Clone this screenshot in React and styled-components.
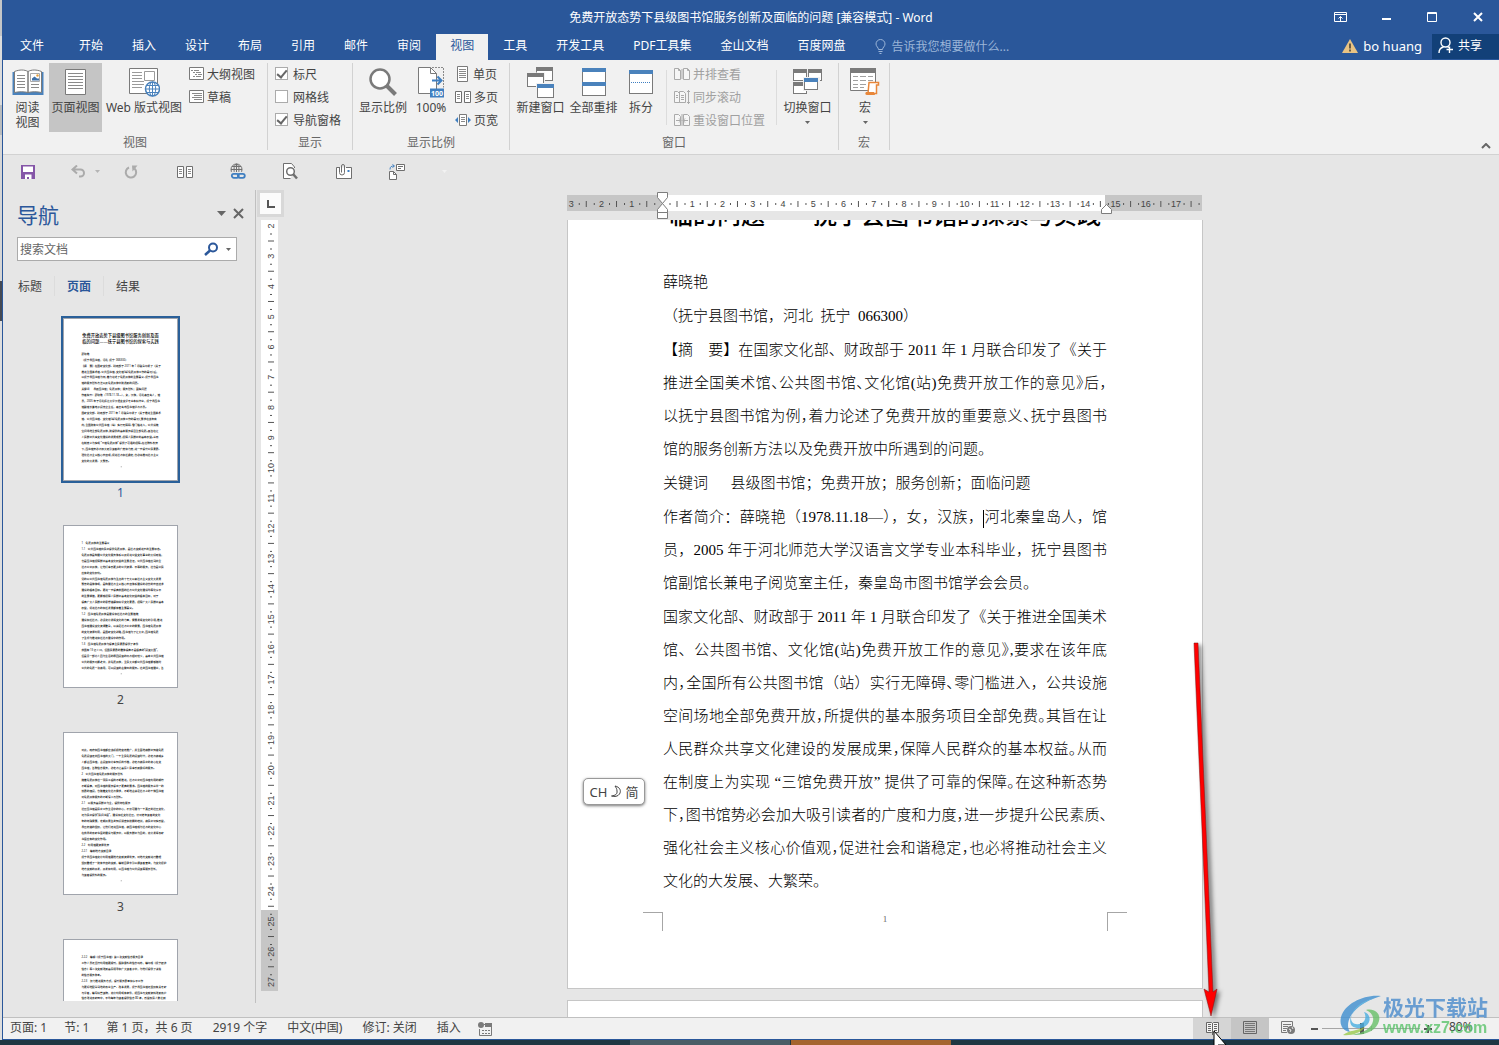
import React, { useState } from "react"
import styled, { createGlobalStyle } from "styled-components"

const RULER_UNIT = 30.24

const TABS = [
  "开始",
  "插入",
  "设计",
  "布局",
  "引用",
  "邮件",
  "审阅",
  "视图",
  "工具",
  "开发工具",
  "PDF工具集",
  "金山文档",
  "百度网盘",
]

// "~" marks a punctuation sign that takes half a cell
const PARAGRAPHS = [
  { lines: ["薛晓艳"] },
  { lines: ["（抚宁县图书馆，河北\u00a0\u00a0抚宁\u00a0\u00a0066300）"] },
  {
    lines: [
      "【摘　要】在国家文化部、财政部于 2011 年 1 月联合印发了《关于",
      "推进全国美术馆~、公共图书馆~、文化馆(站)免费开放工作的意见~》后~，",
      "以抚宁县图书馆为例~，着力论述了免费开放的重要意义~、抚宁县图书",
      "馆的服务创新方法以及免费开放中所遇到的问题。",
    ],
  },
  { lines: ["关键词　\u00a0\u00a0县级图书馆；免费开放；服务创新；面临问题"] },
  {
    lines: [
      "作者简介：薛晓艳（1978.11.18—），女，汉族，|河北秦皇岛人，馆",
      "员，2005 年于河北师范大学汉语言文学专业本科毕业，抚宁县图书",
      "馆副馆长兼电子阅览室主任，秦皇岛市图书馆学会会员。",
    ],
  },
  {
    lines: [
      "国家文化部、财政部于 2011 年 1 月联合印发了《关于推进全国美术",
      "馆、公共图书馆、文化馆(站)免费开放工作的意见~》,要求在该年底",
      "内~，全国所有公共图书馆（站）实行无障碍~、零门槛进入，公共设施",
      "空间场地全部免费开放~，所提供的基本服务项目全部免费~。其旨在让",
      "人民群众共享文化建设的发展成果~，保障人民群众的基本权益~。从而",
      "在制度上为实现 “三馆免费开放” 提供了可靠的保障~。在这种新态势",
      "下~，图书馆势必会加大吸引读者的广度和力度~，进一步提升公民素质~、",
      "强化社会主义核心价值观~，促进社会和谐稳定~，也必将推动社会主义",
      "文化的大发展、大繁荣。",
    ],
  },
]

const TITLE_LINES = [
  "免费开放态势下县级图书馆服务创新及面",
  "临的问题——抚宁县图书馆的探索与实践",
]

const PAGE_ONE = [
  ...TITLE_LINES,
  "",
  ...PARAGRAPHS.reduce((all, item) => all.concat(item.lines), []),
].map(line => line.replace("|", ""))

const PAGE_TWO = [
  "1　免费开放的重要意义",
  "1.1　公共图书馆向民众提供免费开放，是社会文明进步的重要标志~。",
  "免费开放是构建公共文化服务体系以及促进公益文化事业的大好政策~，",
  "也是图书馆保障群众基本文化权益的重要途径，公共图书馆应当向全",
  "社会公众开放，让他们享受更多的公共资源、平等的服务，这也是公民",
  "应有的文化权利。",
  "党的以公共图书馆免费开放为重点的十七大以来社会主义文化大发展",
  "繁荣的具体体现，是构建社会主义核心价值体系建设的必然的价值追求",
  "建设的根本目标。更进一步提高我国的社会公共文化建设均等化水平",
  "的重要举措，更能够保障人民群众基本文化权益的根本目标，对于",
  "提高广大人民群众的思想道德和科学文化素质，保障广大人民群众基本",
  "权益，促进社会的和谐发展都有着重要意义。",
  "1.2　图书馆免费开放是建设和谐社会的重要措施",
  "建设和谐社会，必须充分发挥文化的力量，需要发挥文化的引领~，推进",
  "图书馆建设文化资源整合，以满足社会公众的需要，图书馆免费开放",
  "的文化资源利用，是国家文化战略~，图书馆为了让大众~，图书馆免费",
  "了重视为推进和谐社会建设中的作用。",
  "1.3　图书馆免费开放为提高全民素质提供了条件",
  "我国有 13 亿人口，但国民素质的整体提高不是很高的“阅读大国”，",
  "但是另一部分人因为生活的原因阅读的机会相对较少，基本公共图书馆",
  "公共的服务功能之中，并免费开放，全民大众都公共图书馆能够随时",
  "公共的免费一次使用，可以阅读的去做出的服务。这类图书馆建立，各",
]

const PAGE_THREE = [
  "对此，政府和图书馆都应该积极地宣传推广，并全面地使群众知道免费",
  "免费阅读走向图书馆的大门，一个全民免费的阅读时代，必定会使城乡",
  "人都去图书馆，去阅读和分享知识的乐趣，必定会使民众的身心在文",
  "图书馆，各种信息服务，必定会让基层人民享受到最好的服务。",
  "2　公共图书馆免费开放的服务创新",
  "随着免费开放这一惠民工程的不断推进，社会公众对图书馆利用的期待",
  "不断提高，对图书馆的服务提出了更高的要求。图书馆的服务从单一的",
  "纸质的借阅，也随着文化社会需求，不断地去满足社会上的个体图书馆",
  "对免费开放服务的不断深入与创新。",
  "2.1　以服务基层群众为主，提供特色服务",
  "社区图书馆是民众工作生活中的中心，不仅可建为一个真正的社区文化~，",
  "还为民众提供“民间书屋”，建设和谐文化社区，针对老年读者的文化",
  "年的特殊需要，定期开展各类知识讲座和技能的培训，使民众切实受益~，",
  "县区街道的组织，让他们走进图书馆，使图书馆成为社会的文化中心",
  "在我县的农家书屋的建设与服务中，以服务群众为目的，充分发挥农家",
  "书屋应有的文化作用。",
  "2.2　利用馆藏资源优势",
  "2.2.1　编制地方文献目录",
  "抚宁县图书馆充分利用馆藏地方文献资源优势，对地方文献进行整理",
  "组织整理了一批有价值的文献，编制目录索引以便读者查询，为文化保护",
  "地方文献的开发，开发和利用，以图书馆为公共阅读等服务创新，",
  "为读者提供新的服务。",
]

const PAGE_FOUR = [
  "2.2.2　编辑《抚宁图书馆》第二次文献信息服务目录",
  "工作人员还坚持利用馆藏报刊，跟踪最新的信息动态，编印成《抚宁经济",
  "信息》等二次文献送到基层领导和广大读者手中，为他们提供了决策",
  "的信息服务参考。",
  "2.2.3　努力推进服务方式，提升服务质量和水平工作",
  "为更好地配合当地的农业生产、改革发展，抚宁县图书馆还组织有关专家",
  "与学者，编写科普读物，充分利用现有条件，把图书与文献资料送到农户",
  "信息送进农家田中，平均每年为读者提供信息 80 条，受益农民人数达到",
]

const THUMBS = [PAGE_ONE, PAGE_TWO, PAGE_THREE, PAGE_FOUR]

const splitHalf = (line, as) =>
  line.split(/(~.|\||[\w.,()“”—]+)/).map((part, index) => {
    if (part === "|") return <Caret key={index} />
    if (part[0] === "~")
      return (
        <Half as={as} key={index}>
          {part[1]}
        </Half>
      )
    if (/^[\w.,()“”—]/.test(part))
      return (
        <Latin as={as} key={index}>
          {part}
        </Latin>
      )
    return part
  })

/* ---------- icons ---------- */

const Svg = ({ w, h, children, ...rest }) => (
  <svg
    width={w}
    height={h}
    viewBox={`0 0 ${w} ${h}`}
    fill="none"
    aria-hidden="true"
    {...rest}
  >
    {children}
  </svg>
)

const ReadIcon = () => (
  <Svg w={32} h={28}>
    <path d="M0.5 4h31v23H0.5z" fill="#4a82bc" />
    <path
      d="M2.500 3.500c5-2 10-2 13.500 0v21c-4-1-9-1-13.500 0zM29.500 3.500c-5-2-10-2-13.500 0v21c4-1 9-1 13.500 0z"
      fill="#fff"
      stroke="#7a7a7a"
    />
    <path
      d="M5 7.500h8M5 10.500h8M5 13.500h8M5 16.500h8M5 19.500h8M19 16.500h8M19 19.500h8"
      stroke="#8a8a8a"
    />
    <path d="M18.500 5.500h9v8h-9z" fill="#fff" stroke="#aaa" />
    <path d="M20 12.500v-2l2.500-2 2.500 2h2v2z" fill="#3c6fa8" />
    <circle cx="25.500" cy="7.500" r="1.200" fill="#e8a13c" />
  </Svg>
)

const PageIcon = () => (
  <Svg w={22} h={28}>
    <path d="M0.500 1.500h20v25h-20z" fill="#fff" stroke="#7a7a7a" />
    <path
      d="M3 5.500h15M3 8.500h15M3 11.500h15M3 14.500h15M3 17.500h15M3 20.500h15"
      stroke="#8a8a8a"
    />
  </Svg>
)

const WebIcon = () => (
  <Svg w={32} h={30}>
    <path d="M1.500 1.500h28v25h-28z" fill="#fff" stroke="#7a7a7a" />
    <path
      d="M4 5.500h10M4 8.500h10M4 11.500h10M4 14.500h12M4 17.500h12M4 20.500h10"
      stroke="#9a9a9a"
    />
    <path d="M16.500 4.500h10v9h-10z" stroke="#9a9a9a" />
    <circle cx="24.500" cy="22" r="7" fill="#fff" stroke="#4a82bc" strokeWidth="1.500" />
    <ellipse cx="24.500" cy="22" rx="3.200" ry="7" stroke="#4a82bc" />
    <path d="M17.500 22h14M24.500 15v14M18.500 18.500h12M18.500 25.500h12" stroke="#4a82bc" />
  </Svg>
)

const OutlineIcon = () => (
  <Svg w={15} h={14}>
    <path d="M0.500 0.500h14v12H0.500z" fill="#fff" stroke="#7a7a7a" />
    <path d="M2 3.500h2M5 3.500h5M4 5.500h2M7 5.500h5M6 7.500h2M9 7.500h4M4 9.500h2M7 9.500h5" stroke="#8a8a8a" />
  </Svg>
)

const DraftIcon = () => (
  <Svg w={15} h={14}>
    <path d="M0.500 0.500h14v12H0.500z" fill="#fff" stroke="#7a7a7a" />
    <path d="M3 3.500h10M5 5.500h8M3 7.500h10M5 9.500h8" stroke="#8a8a8a" />
  </Svg>
)

const ZoomIcon = () => (
  <Svg w={30} h={30}>
    <circle cx="12" cy="12" r="9.500" fill="#fff" stroke="#7a7a7a" strokeWidth="2.500" />
    <path d="M19 19l8.500 8.500" stroke="#7a7a7a" strokeWidth="4" />
  </Svg>
)

const HundredIcon = () => (
  <Svg w={28} h={32}>
    <path d="M1.500 1.500h12l6 6v20h-18z" fill="#fff" stroke="#7a7a7a" />
    <path d="M13.500 1.500v6h6" stroke="#7a7a7a" />
    <path d="M15 1.500h11.500v20" stroke="#8a8a8a" strokeDasharray="2 1" />
    <path d="M15 14.500h9M20.500 10.500l4 4-4 4" stroke="#3f7fc1" strokeWidth="2" />
    <path d="M13 22.500h14v9H13z" fill="#3f7fc1" />
    <text x="20" y="29.500" fontSize="7" fontWeight="700" textAnchor="middle" fill="#fff">
      100
    </text>
  </Svg>
)

const OnePageIcon = () => (
  <Svg w={15} h={16}>
    <path d="M2.500 0.500h10v15h-10z" fill="#fff" stroke="#7a7a7a" />
    <path d="M4 3.500h7M4 5.500h7M4 7.500h7M4 9.500h7M4 11.500h7" stroke="#8a8a8a" />
  </Svg>
)

const TwoPageIcon = () => (
  <Svg w={16} h={12}>
    <path d="M0.500 0.500h6v11h-6zM9.500 0.500h6v11h-6z" fill="#fff" stroke="#6f6f6f" />
    <path d="M2 3.500h3M2 5.500h3M2 7.500h3M11 3.500h3M11 5.500h3M11 7.500h3" stroke="#8a8a8a" />
  </Svg>
)

const PageWidthIcon = () => (
  <Svg w={16} h={12}>
    <path d="M4.500 0.500h7v11h-7z" fill="#fff" stroke="#7a7a7a" />
    <path d="M6 3.500h4M6 5.500h4M6 7.500h4" stroke="#8a8a8a" />
    <path d="M3 3v6L0 6zM13 3v6l3-3z" fill="#3f7fc1" />
  </Svg>
)

const WindowBox = ({ x, y, w, h, color = "#7a7a7a" }) => (
  <g>
    <rect x={x} y={y} width={w} height={h} fill="#fff" stroke="#7a7a7a" />
    <rect x={x - 0.5} y={y - 0.5} width={w + 1} height="4" fill={color} />
  </g>
)

const NewWindowIcon = () => (
  <Svg w={28} h={32}>
    <WindowBox x={9.5} y={1.5} w={16} h={13} />
    <path d="M-1 6.500h19v15h-19z" fill="#f1f1f1" />
    <WindowBox x={0.5} y={7.5} w={16} h={13} />
    <path d="M9 17h19v15H9z" fill="#f1f1f1" />
    <WindowBox x={10.5} y={18.5} w={16} h={13} color="#4a82bc" />
  </Svg>
)

const ArrangeIcon = () => (
  <Svg w={24} h={30}>
    <WindowBox x={0.5} y={1.5} w={23} h={14} color="#4a82bc" />
    <WindowBox x={0.5} y={15.5} w={23} h={13} color="#4a82bc" />
  </Svg>
)

const SplitIcon = () => (
  <Svg w={24} h={26}>
    <WindowBox x={0.5} y={1.5} w={23} h={23} color="#4a82bc" />
    <path d="M2 13.500h20" stroke="#3f7fc1" strokeDasharray="1 1" />
  </Svg>
)

const SideIcon = () => (
  <Svg w={16} h={12}>
    <path d="M0.500 0.500h4l2 2v9h-6zM9.500 0.500h4l2 2v9h-6z" fill="#f6f6f6" stroke="#aaa" />
    <path d="M4.500 0.500v2h2M13.500 0.500v2h2" stroke="#aaa" />
    <path d="M8 1v10" stroke="#aaa" />
  </Svg>
)

const SyncIcon = () => (
  <Svg w={16} h={16}>
    <path d="M0.500 2.500h3l2 2v9h-5zM5.500 2.500h4l2 2v9h-6z" fill="#f6f6f6" stroke="#aaa" />
    <path d="M7 6.500h3M7 8.500h3M7 10.500h3M2 6.500h2M2 8.500h2M14.500 1v14M13 2.500h3M13 13.500h3" stroke="#aaa" />
  </Svg>
)

const ResetIcon = () => (
  <Svg w={16} h={12}>
    <path d="M0.500 0.500h4l2 2v9h-6zM9.500 0.500h4l2 2v9h-6z" fill="#f6f6f6" stroke="#aaa" />
    <path d="M2 6.500h5M5 4.500l2 2-2 2M14 6.500H9M11 4.500l-2 2 2 2M8 0v12" stroke="#aaa" />
  </Svg>
)

const SwitchIcon = () => (
  <Svg w={30} h={28}>
    <WindowBox x={0.5} y={1.5} w={13} h={11} />
    <WindowBox x={15.5} y={1.5} w={13} h={11} />
    <WindowBox x={0.5} y={14.5} w={13} h={11} />
    <path d="M10 9h17v14H10z" fill="#f1f1f1" />
    <WindowBox x={11.5} y={10.5} w={13} h={11} color="#4a82bc" />
  </Svg>
)

const MacroIcon = () => (
  <Svg w={32} h={30}>
    <path d="M1.500 1.500h25v22h-25z" fill="#fff" stroke="#7a7a7a" />
    <path d="M1 1h26v5H1z" fill="#7a7a7a" />
    <path
      d="M4 9.500h5M11 9.500h6M19 9.500h5M4 13.500h5M11 13.500h6M19 13.500h5M4 17.500h5M11 17.500h6M4 20.500h5M11 20.500h4"
      stroke="#a0a0a0"
    />
    <path d="M20 15.500h9.500v2.500h-2v8.500H19z" fill="#fff" stroke="#e8873a" strokeWidth="1.500" />
    <path d="M17 25h8l1 3h-8c-2 0-2-2-1-3z" fill="#e8873a" />
  </Svg>
)

const ArrowDown = ({ color = "#666" }) => (
  <Svg w={5} h={3}>
    <path d="M0 0h5L2.500 3z" fill={color} />
  </Svg>
)

const SaveIcon = () => (
  <Svg w={14} h={14}>
    <path d="M0 0h14v14H0z" fill="#8556a8" />
    <path d="M2 1.500h10v5.500H2z" fill="#fff" />
    <path d="M4 9.500h6.500v4.500H8v-2H6v2H4z" fill="#fff" />
  </Svg>
)

const UndoIcon = () => (
  <Svg w={15} h={13}>
    <path d="M6 0.500L1.500 4.500 6 8.500M2 4.500h7.500a3.500 3.500 0 0 1 0 7H8" stroke="#ababab" strokeWidth="2" />
  </Svg>
)

const RedoIcon = () => (
  <Svg w={14} h={14}>
    <path d="M5 2.500a5.200 5.200 0 1 0 5.500 1" stroke="#ababab" strokeWidth="2" />
    <path d="M8 0.500h5.500L8.500 6.500z" fill="#ababab" />
  </Svg>
)

const GlobeLinkIcon = () => (
  <Svg w={16} h={17}>
    <circle cx="6.500" cy="6.500" r="5.500" stroke="#6f6f6f" />
    <ellipse cx="6.500" cy="6.500" rx="2.500" ry="5.500" stroke="#6f6f6f" />
    <path d="M1 6.500h11M2 3.500h9M6.500 1v11" stroke="#6f6f6f" />
    <path d="M0 9h16v8H0z" fill="#e6e6e6" />
    <rect x="1.800" y="10.800" width="7" height="4" rx="2" stroke="#3f7fc1" strokeWidth="1.800" />
    <rect x="7.800" y="10.800" width="7" height="4" rx="2" stroke="#3f7fc1" strokeWidth="1.800" />
  </Svg>
)

const PreviewIcon = () => (
  <Svg w={15} h={17}>
    <path d="M11.500 5V4L8.500 0.500h-8v15h7" fill="#fff" stroke="#6f6f6f" />
    <circle cx="7.500" cy="8.500" r="3.800" fill="#fff" stroke="#6f6f6f" strokeWidth="1.500" />
    <path d="M10 11l4 4.500" stroke="#6f6f6f" strokeWidth="2.500" />
  </Svg>
)

const MailIcon = () => (
  <Svg w={17} h={16}>
    <path d="M3 3.500H0.500v11h15v-11H10" fill="#fff" stroke="#6f6f6f" />
    <path d="M3.500 3v5.500a2.500 2.500 0 0 0 5 0V2a1.500 1.500 0 0 0-3 0v6.500" stroke="#6f6f6f" />
    <path d="M11.500 6h2v2h-2z" fill="#3f7fc1" />
  </Svg>
)

const CompareIcon = () => (
  <Svg w={17} h={17}>
    <path d="M7.500 1.500h8v6h-8z" fill="#fff" stroke="#6f6f6f" />
    <path d="M9 3.500h5M9 5.500h3" stroke="#6f6f6f" />
    <path d="M1 6.500c0-3 1.500-3.500 4-3.500M3.500 1.500L5.500 3l-2 1.500" stroke="#3f7fc1" />
    <path d="M0.500 8.500h4l3 3v5h-7z" fill="#fff" stroke="#6f6f6f" />
    <path d="M4.500 8.500v3h3" stroke="#6f6f6f" />
  </Svg>
)

const WarningIcon = () => (
  <Svg w={16} h={14}>
    <path d="M8 0l8 14H0z" fill="#e9c383" />
    <path d="M8 4.500v5M8 10.500v2" stroke="#5a5040" strokeWidth="1.800" />
  </Svg>
)

const ShareIcon = () => (
  <Svg w={16} h={17}>
    <circle cx="7.500" cy="5.500" r="4.500" stroke="#fff" strokeWidth="1.400" />
    <path d="M1 16c0-3.500 2-5.500 4.500-6M9.500 9.500l1.500 1M11.500 9.500v6.500M8.500 12.500h6.500" stroke="#fff" strokeWidth="1.400" />
  </Svg>
)

const BulbIcon = () => (
  <Svg w={11} h={15}>
    <path d="M3.500 10.500C3.500 8.500 1 7.500 1 5a4.500 4.500 0 0 1 9 0c0 2.500-2.500 3.500-2.500 5.500zM3.500 12.500h4M4.500 14.500h2" stroke="#9bb5d8" />
  </Svg>
)

const SearchIcon = () => (
  <Svg w={15} h={14}>
    <circle cx="9" cy="5.500" r="4" stroke="#2b579a" strokeWidth="2" />
    <path d="M6 8.500l-5 4.500" stroke="#2b579a" strokeWidth="2.500" />
  </Svg>
)

const CloseIcon = ({ color, size = 10 }) => (
  <Svg w={size} h={size}>
    <path d={`M1 1l${size - 2} ${size - 2}M${size - 1} 1L1 ${size - 1}`} stroke={color} strokeWidth="2" />
  </Svg>
)

const RibbonToggleIcon = () => (
  <Svg w={13} h={10}>
    <path d="M0.500 0.500h12v9H0.500zM0.500 2.500h12M6.500 9V4.500M4.500 6.500l2-2 2 2" stroke="#fff" />
  </Svg>
)

const MacroRecordIcon = () => (
  <Svg w={14} h={14}>
    <path d="M6 2.500h7.500v11h-12V7" stroke="#7a7a7a" />
    <path d="M7 1h7v4H7z" fill="#7a7a7a" />
    <path d="M4 8.500h2M7 8.500h2M10 8.500h2M4 11.500h2M7 11.500h2M10 11.500h2" stroke="#7a7a7a" />
    <circle cx="3" cy="3" r="3" fill="#7a7a7a" />
  </Svg>
)

const StatusReadIcon = () => (
  <Svg w={13} h={14}>
    <path d="M0.500 1.500h5l1 1 1-1h5v10h-5l-1 1-1-1h-5z" fill="#f5f5f5" stroke="#666" />
    <path d="M6.500 2v12" stroke="#666" />
    <path d="M2 3.500h3M2 5.500h3M2 7.500h3M2 9.500h3M8 3.500h3M8 5.500h3M8 7.500h3M8 9.500h3" stroke="#666" />
  </Svg>
)

const StatusPageIcon = () => (
  <Svg w={14} h={13}>
    <path d="M0.500 0.500h13v12h-13z" stroke="#666" />
    <path d="M2 2.500h10M2 4.500h10M2 6.500h10M2 8.500h10M2 10.500h10" stroke="#777" />
  </Svg>
)

const StatusWebIcon = () => (
  <Svg w={14} h={13}>
    <path d="M11.500 5V0.500H0.500v11H6M2 3.500h8M2 5.500h5M2 7.500h4M2 9.500h3" stroke="#7a7a7a" />
    <circle cx="10" cy="9" r="4" fill="#7a7a7a" />
    <path d="M8 8l2 1-1 2M11 6l1 2" stroke="#eee" />
  </Svg>
)

/* ---------- rulers ---------- */

const HorizontalRuler = () => {
  const zero = 95
  const marks = []
  for (let i = -3; i <= 17; i++) {
    const x = zero + i * RULER_UNIT
    if (i !== 0)
      marks.push(
        <text key={i} x={x} y="15" textAnchor="middle">
          {Math.abs(i)}
        </text>
      )
    marks.push(
      <path
        key={`t${i}`}
        d={`M${x + 8} 11v2M${x + 15} 9v6M${x + 23} 11v2`}
        stroke="#555"
      />
    )
  }
  return (
    <HRuler width="636" height="28" viewBox="0 0 636 28" aria-label="标尺">
      <rect y="3" width="635" height="16" fill="#c6c6c6" />
      <rect x={zero} y="3" width="443" height="16" fill="#fff" />
      {marks}
      <g fill="#fff" stroke="#7d7d7d">
        <path d="M90.500 0.500h10v5l-5 6-5-6zM90.500 20.500v-3l5-6 5 6v3zM90.500 20.500h10v6h-10z" />
        <path d="M534.500 21.500v-4l5-5 5 5v4z" />
      </g>
    </HRuler>
  )
}

const VerticalRuler = () => {
  const marks = []
  for (let i = 2; i <= 27; i++) {
    const y = 6 + (i - 2) * RULER_UNIT
    marks.push(
      <text
        key={i}
        x="10"
        y={y}
        textAnchor="middle"
        dominantBaseline="central"
        transform={`rotate(-90 10 ${y})`}
      >
        {i}
      </text>
    )
    if (i < 27)
      marks.push(
        <path
          key={`t${i}`}
          d={`M9 ${y + 8}h2M7 ${y + 15}h6M9 ${y + 23}h2`}
          stroke="#555"
        />
      )
  }
  return (
    <VRuler width="17" height="771" viewBox="0 0 17 771" aria-label="垂直标尺">
      <rect width="17" height="690" fill="#fff" />
      <rect y="690" width="17" height="81" fill="#c6c6c6" />
      {marks}
    </VRuler>
  )
}

const Thumbnail = ({ lines, title }) => (
  <ThumbDrawing viewBox="0 0 636 901">
    {lines.map((line, index) => {
      const isTitle = title && index < 2
      return (
        <text
          key={index}
          x={isTitle ? 318 : 98}
          y={101 + index * 33.4}
          textAnchor={isTitle ? "middle" : "start"}
          fontSize={isTitle ? 24 : 15}
          fontWeight={500}
        >
          {splitHalf(line, "tspan")}
        </text>
      )
    })}
    <circle cx="322" cy="832" r="3" fill="#888" />
  </ThumbDrawing>
)

/* ---------- page ---------- */

const App = () => {
  const [tab, setTab] = useState("视图")
  const [page, setPage] = useState(0)
  const [navTab, setNavTab] = useState("页面")

  return (
    <Desktop>
      <GlobalStyle />
      <Window>
        <TitleBar>
          <Title>免费开放态势下县级图书馆服务创新及面临的问题 [兼容模式] - Word</Title>
          <WindowButtons>
            <WindowButton aria-label="功能区显示选项">
              <RibbonToggleIcon />
            </WindowButton>
            <WindowButton aria-label="最小化">
              <Svg w={9} h={10}>
                <path d="M0 7h9" stroke="#fff" strokeWidth="2" />
              </Svg>
            </WindowButton>
            <WindowButton aria-label="最大化">
              <Svg w={10} h={10}>
                <path d="M0.500 0.500h9v9h-9zM0 1.500h10" stroke="#fff" />
              </Svg>
            </WindowButton>
            <WindowButton aria-label="关闭">
              <CloseIcon color="#fff" />
            </WindowButton>
          </WindowButtons>
        </TitleBar>

        <TabBar>
          <FileTab>文件</FileTab>
          {TABS.map(item => (
            <TabBtn key={item} $active={item === tab} onClick={() => setTab(item)}>
              {item}
            </TabBtn>
          ))}
          <TellMe>
            <BulbIcon />
            告诉我您想要做什么...
          </TellMe>
          <Account>
            <WarningIcon />
            bo huang
          </Account>
          <ShareBtn>
            <ShareIcon />
            共享
          </ShareBtn>
        </TabBar>

        <Ribbon>
          <Group>
            <GroupBody $left={3}>
              <BigButton $width={43}>
                <BigIcon>
                  <ReadIcon />
                </BigIcon>
                阅读
                <br />
                视图
              </BigButton>
              <BigButton $width={53} $pressed>
                <BigIcon>
                  <PageIcon />
                </BigIcon>
                页面视图
              </BigButton>
              <BigButton $width={84}>
                <BigIcon>
                  <WebIcon />
                </BigIcon>
                Web 版式视图
              </BigButton>
              <SmallColumn $left={3} $right={12}>
                <SmallButton>
                  <OutlineIcon />
                  大纲视图
                </SmallButton>
                <SmallButton>
                  <DraftIcon />
                  草稿
                </SmallButton>
              </SmallColumn>
            </GroupBody>
            <GroupName>视图</GroupName>
          </Group>

          <Group>
            <GroupBody $left={7}>
              <SmallColumn $left={0} $right={11}>
                <CheckLabel>
                  <CheckBox type="checkbox" defaultChecked />
                  标尺
                </CheckLabel>
                <CheckLabel>
                  <CheckBox type="checkbox" />
                  网格线
                </CheckLabel>
                <CheckLabel>
                  <CheckBox type="checkbox" defaultChecked />
                  导航窗格
                </CheckLabel>
              </SmallColumn>
            </GroupBody>
            <GroupName>显示</GroupName>
          </Group>

          <Group>
            <GroupBody $left={4}>
              <BigButton $width={52}>
                <BigIcon>
                  <ZoomIcon />
                </BigIcon>
                显示比例
              </BigButton>
              <BigButton $width={44}>
                <BigIcon>
                  <HundredIcon />
                </BigIcon>
                100%
              </BigButton>
              <SmallColumn $left={2} $right={11}>
                <SmallButton>
                  <OnePageIcon />
                  单页
                </SmallButton>
                <SmallButton>
                  <TwoPageIcon />
                  多页
                </SmallButton>
                <SmallButton>
                  <PageWidthIcon />
                  页宽
                </SmallButton>
              </SmallColumn>
            </GroupBody>
            <GroupName>显示比例</GroupName>
          </Group>

          <Group>
            <GroupBody $left={4}>
              <BigButton $width={53}>
                <BigIcon>
                  <NewWindowIcon />
                </BigIcon>
                新建窗口
              </BigButton>
              <BigButton $width={53}>
                <BigIcon>
                  <ArrangeIcon />
                </BigIcon>
                全部重排
              </BigButton>
              <BigButton $width={42}>
                <BigIcon>
                  <SplitIcon />
                </BigIcon>
                拆分
              </BigButton>
              <InnerLine $left={4} />
              <SmallColumn $left={7} $right={11}>
                <SmallButton disabled>
                  <SideIcon />
                  并排查看
                </SmallButton>
                <SmallButton disabled>
                  <SyncIcon />
                  同步滚动
                </SmallButton>
                <SmallButton disabled>
                  <ResetIcon />
                  重设窗口位置
                </SmallButton>
              </SmallColumn>
              <InnerLine $left={0} />
              <BigButton $width={61}>
                <BigIcon>
                  <SwitchIcon />
                </BigIcon>
                切换窗口
                <DropMark>
                  <ArrowDown />
                </DropMark>
              </BigButton>
            </GroupBody>
            <GroupName>窗口</GroupName>
          </Group>

          <Group>
            <GroupBody $left={2}>
              <BigButton $width={48}>
                <BigIcon>
                  <MacroIcon />
                </BigIcon>
                宏
                <DropMark>
                  <ArrowDown />
                </DropMark>
              </BigButton>
            </GroupBody>
            <GroupName>宏</GroupName>
          </Group>

          <CollapseBtn aria-label="折叠功能区">
            <Svg w={10} h={6}>
              <path d="M1 5l4-4 4 4" stroke="#666" strokeWidth="2" />
            </Svg>
          </CollapseBtn>
        </Ribbon>

        <QuickBar>
          <QuickButton $width={50} aria-label="保存">
            <SaveIcon />
          </QuickButton>
          <QuickButton aria-label="撤消">
            <UndoIcon />
            <ArrowDown color="#b5b5b5" />
          </QuickButton>
          <QuickButton aria-label="重复">
            <RedoIcon />
          </QuickButton>
          <QuickButton aria-label="多页">
            <TwoPageIcon />
          </QuickButton>
          <QuickButton aria-label="超链接">
            <GlobeLinkIcon />
          </QuickButton>
          <QuickButton aria-label="打印预览">
            <PreviewIcon />
          </QuickButton>
          <QuickButton aria-label="电子邮件">
            <MailIcon />
          </QuickButton>
          <QuickButton aria-label="比较">
            <CompareIcon />
          </QuickButton>
          <QuickButton aria-label="自定义">
            <ArrowDown color="#f2f2f2" />
          </QuickButton>
        </QuickBar>

        <Body>
          <NavPane>
            <NavHeader>
              <NavTitle>导航</NavTitle>
              <IconButton aria-label="任务窗格选项">
                <Svg w={9} h={5}>
                  <path d="M0 0h9L4.500 5z" fill="#666" />
                </Svg>
              </IconButton>
              <IconButton aria-label="关闭窗格">
                <CloseIcon color="#666" size={11} />
              </IconButton>
            </NavHeader>
            <SearchBox>
              <SearchInput placeholder="搜索文档" aria-label="搜索文档" />
              <IconButton aria-label="搜索">
                <SearchIcon />
              </IconButton>
              <IconButton aria-label="搜索选项">
                <ArrowDown />
              </IconButton>
            </SearchBox>
            <NavTabs>
              {["标题", "页面", "结果"].map(item => (
                <NavTab
                  key={item}
                  $active={item === navTab}
                  onClick={() => setNavTab(item)}
                >
                  {item}
                </NavTab>
              ))}
            </NavTabs>
            <ThumbList>
              {THUMBS.map((lines, index) => (
                <ThumbItem key={index}>
                  <ThumbButton $active={index === page} onClick={() => setPage(index)}>
                    <Thumbnail lines={lines} title={index === 0} />
                  </ThumbButton>
                  <ThumbNumber $active={index === page}>{index + 1}</ThumbNumber>
                </ThumbItem>
              ))}
            </ThumbList>
          </NavPane>

          <RulerColumn>
            <TabCorner aria-label="制表符">
              <Svg w={8} h={8}>
                <path d="M1 0v7h7" stroke="#555" strokeWidth="2" />
              </Svg>
            </TabCorner>
            <VerticalRuler />
          </RulerColumn>

          <Canvas>
            <Sheet>
              <HorizontalRuler />
              <Paper>
                <DocTitle>{TITLE_LINES[1]}</DocTitle>
                <DocBody>
                  {PARAGRAPHS.map((item, index) => (
                    <Paragraph key={index}>
                      {item.lines.map((line, i) => (
                        <Line key={i} $full={i < item.lines.length - 1}>
                          {splitHalf(line)}
                        </Line>
                      ))}
                    </Paragraph>
                  ))}
                </DocBody>
                <PageFoot>
                  <CropMark $side="right" />
                  <PageNumber>1</PageNumber>
                  <CropMark $side="left" />
                </PageFoot>
              </Paper>
              <NextPaper />
              <ImeBadge>
                CH
                <Svg w={12} h={13}>
                  <path d="M5 1c5 1 6.500 5 4.500 8-1.500 2.500-5 3-8 2 4-.5 6-2 5.500-5C7 4 6 2.500 5 1z" stroke="#444" />
                </Svg>
                简
              </ImeBadge>
            </Sheet>
          </Canvas>
        </Body>

        <StatusBar>
          <StatusItem $gap={17}>页面: 1</StatusItem>
          <StatusItem $gap={17}>节: 1</StatusItem>
          <StatusItem>第 1 页，共 6 页</StatusItem>
          <StatusItem>2919 个字</StatusItem>
          <StatusItem>中文(中国)</StatusItem>
          <StatusItem>修订: 关闭</StatusItem>
          <StatusItem $gap={17}>插入</StatusItem>
          <MacroRecordIcon />
          <ViewButtons>
            <ViewButton $tone="#d5d5d5" aria-label="阅读视图">
              <StatusReadIcon />
            </ViewButton>
            <ViewButton $tone="#c5c5c5" aria-label="页面视图">
              <StatusPageIcon />
            </ViewButton>
            <ViewButton $tone="transparent" aria-label="Web 版式视图">
              <StatusWebIcon />
            </ViewButton>
          </ViewButtons>
          <ZoomStep aria-label="缩小">
            <Svg w={7} h={8}>
              <path d="M0 4h7" stroke="#555" strokeWidth="2" />
            </Svg>
          </ZoomStep>
          <ZoomRange type="range" min="0" max="100" defaultValue="40" aria-label="缩放" />
          <ZoomStep aria-label="放大">
            <Svg w={8} h={8}>
              <path d="M0 4h8M4 0v8" stroke="#555" strokeWidth="2" />
            </Svg>
          </ZoomStep>
          <ZoomValue>80%</ZoomValue>
        </StatusBar>
      </Window>

      <TaskBar>
        <TaskItem $tone="#4a5d66" />
        <TaskItem $tone="#a5642f" />
      </TaskBar>

      <Arrow width="50" height="410" viewBox="0 0 50 410">
        <path d="M14 8h4l15 349 4-3-6 27-7-27 5 3z" fill="#f00" stroke="#7a1010" strokeWidth="0.500" />
      </Arrow>
      <Watermark>
        <Svg w={44} h={42}>
          <path d="M42 1C26-1 6 8 2 22c-2 8 2 14 9 15C5 28 12 10 42 1z" fill="#3f8fd0" />
          <path d="M36 3C22 6 13 14 12 23c0 4 3 7 8 6 6-1 8-7 5-12 4 1 7 5 5 10-2 6-12 8-17 4-5-5-1-20 23-28z" fill="#4aaee0" />
          <path d="M27 15c9-2 15 4 13 11-2 9-14 15-27 14 11-2 20-7 21-14 1-5-2-9-7-11z" fill="#69c06a" />
          <path d="M4 40c6-5 14-4 22-8-4 6-14 9-22 8z" fill="#9acb4e" />
        </Svg>
        <WatermarkText>
          <WatermarkName>极光下载站</WatermarkName>
          <WatermarkSite>www.xz7.com</WatermarkSite>
        </WatermarkText>
      </Watermark>
      <Pointer width="14" height="14" viewBox="0 0 14 14">
        <path d="M1 0v18l4-4h8z" fill="#fff" stroke="#000" />
      </Pointer>
    </Desktop>
  )
}

export default App

const GlobalStyle = createGlobalStyle`
  * {
    box-sizing: border-box;
  }
  body {
    margin: 0;
    overflow: hidden;
    font-family: "Noto Sans", "Noto Sans CJK SC", sans-serif;
    font-size: 12px;
    color: #444;
  }
  button, input {
    font: inherit;
    color: inherit;
    border: none;
    background: none;
    padding: 0;
    margin: 0;
  }
  svg {
    display: block;
    flex: none;
  }
`
const Desktop = styled.div`
  position: relative;
  display: flex;
  flex-direction: column;
  height: 100vh;
  overflow: hidden;
  padding-left: 2px;
  background: linear-gradient(
    #c4c6c8 0 36px,
    #dcdcdc 36px 105px,
    #b9bcbe 105px 135px,
    #d6d6d6 135px 281px,
    #454a54 281px 321px,
    #dedede 321px
  );
`
const Window = styled.div`
  flex: 1;
  min-height: 0;
  display: flex;
  flex-direction: column;
  background: #e6e6e6;
  border-left: 1px solid #2a579a;
  border-bottom: 1px solid #2a579a;
`
const TitleBar = styled.header`
  display: grid;
  grid-template-columns: 182px 1fr 182px;
  align-items: center;
  height: 34px;
  flex: none;
  background: #2a579a;
  color: #fff;
`
const Title = styled.h1`
  grid-column: 2;
  margin: 0;
  text-align: center;
  font-size: 12px;
  font-weight: 400;
`
const WindowButtons = styled.div`
  display: flex;
`
const WindowButton = styled.button`
  display: flex;
  align-items: center;
  justify-content: center;
  width: 46px;
  flex: none;
  height: 32px;
`
const TabBar = styled.nav`
  display: flex;
  align-items: stretch;
  gap: 1px;
  height: 26px;
  flex: none;
  background: #2a579a;
  color: #fff;
`
const TabBtn = styled.button`
  padding: 0 14px 4px;
  white-space: nowrap;
  background: ${props => (props.$active ? "#f1f1f1" : "transparent")};
  color: ${props => (props.$active ? "#2a579a" : "#fff")};
`
const FileTab = styled(TabBtn)`
  padding: 0 20px 4px 17px;
`
const TellMe = styled.button`
  display: flex;
  align-items: center;
  gap: 5px;
  margin-left: 15px;
  padding-bottom: 2px;
  color: #9bb5d8;
`
const Account = styled.button`
  display: flex;
  align-items: center;
  gap: 5px;
  margin-left: auto;
  margin-right: 9px;
  padding-bottom: 2px;
  font-size: 13px;
`
const ShareBtn = styled.button`
  display: flex;
  align-items: center;
  gap: 4px;
  width: 67px;
  height: 25px;
  padding: 0 6px 3px;
  background: #124078;
`
const Ribbon = styled.section`
  display: flex;
  flex: none;
  height: 95px;
  padding-top: 3px;
  background: #f1f1f1;
  border-bottom: 1px solid #d2d2d2;
`
const Group = styled.div`
  display: flex;
  flex-direction: column;
  margin-bottom: 4px;
  border-right: 1px solid #d2d2d2;
`
const GroupBody = styled.div`
  display: flex;
  flex: none;
  height: 69px;
  padding-left: ${props => props.$left}px;
`
const GroupName = styled.div`
  height: 18px;
  line-height: 21px;
  text-align: center;
  color: #666;
`
const BigButton = styled.button`
  display: flex;
  flex-direction: column;
  align-items: center;
  width: ${props => props.$width}px;
  padding-top: 3px;
  line-height: 15px;
  white-space: nowrap;
  background: ${props => (props.$pressed ? "#c5c5c5" : "transparent")};
`
const BigIcon = styled.span`
  display: flex;
  align-items: center;
  height: 32px;
  margin-bottom: 2px;
`
const DropMark = styled.span`
  padding-top: 6px;
`
const SmallColumn = styled.div`
  display: flex;
  flex-direction: column;
  align-items: flex-start;
  margin-top: -1px;
  margin-left: ${props => props.$left}px;
  margin-right: ${props => props.$right}px;
`
const SmallButton = styled.button`
  display: flex;
  align-items: center;
  gap: 3px;
  height: 23px;
  white-space: nowrap;

  &:disabled {
    color: #a0a0a0;
  }
`
const CheckLabel = styled.label`
  display: flex;
  align-items: center;
  gap: 5px;
  height: 23px;
  white-space: nowrap;
`
const CheckBox = styled.input`
  appearance: none;
  display: flex;
  justify-content: center;
  width: 13px;
  height: 13px;
  border: 1px solid #ababab;
  background: #fff;

  &:checked::after {
    content: "";
    width: 4px;
    height: 8px;
    border: solid #666;
    border-width: 0 2px 2px 0;
    transform: rotate(40deg);
  }
`
const InnerLine = styled.span`
  width: 1px;
  margin: 7px 0;
  margin-left: ${props => props.$left}px;
  background: #dcdcdc;
`
const CollapseBtn = styled.button`
  align-self: flex-end;
  margin-left: auto;
  padding: 5px 8px;
`
const QuickBar = styled.div`
  display: flex;
  flex: none;
  align-items: center;
  height: 35px;
  padding: 0 0 2px 18px;
`
const QuickButton = styled.button`
  display: flex;
  align-items: center;
  gap: 9px;
  width: ${props => props.$width || 53}px;
  height: 24px;
`
const Body = styled.main`
  display: flex;
  flex: 1;
  min-height: 0;
`
const NavPane = styled.aside`
  display: flex;
  flex-direction: column;
  width: 253px;
  flex: none;
  margin-bottom: 14px;
  padding: 4px 18px 2px 14px;
  border-right: 1px solid #c0c0c0;
`
const NavHeader = styled.div`
  display: flex;
  align-items: flex-start;
  height: 43px;
  margin-right: -9px;
  padding-top: 9px;
`
const NavTitle = styled.h2`
  flex: 1;
  margin: 0;
  font-size: 21px;
  font-weight: 400;
  line-height: 24px;
  color: #2b579a;
`
const IconButton = styled.button`
  display: flex;
  align-items: center;
  justify-content: center;
  min-width: 15px;
  height: 20px;
  margin-left: 2px;
`
const SearchBox = styled.div`
  display: flex;
  align-items: center;
  height: 24px;
  border: 1px solid #ababab;
  background: #fff;
`
const SearchInput = styled.input`
  flex: 1;
  min-width: 0;
  padding-left: 2px;
  outline: none;

  &::placeholder {
    color: #666;
  }
`
const NavTabs = styled.div`
  display: flex;
  align-items: center;
  height: 50px;
`
const NavTab = styled.button`
  height: 20px;
  padding: 0 12px;
  border-right: 1px solid #dcdcdc;
  font-weight: ${props => (props.$active ? 700 : 400)};
  color: ${props => (props.$active ? "#2b579a" : "#444")};

  &:first-child {
    padding-left: 1px;
  }
  &:last-child {
    border-right: none;
  }
`
const ThumbList = styled.ul`
  display: flex;
  flex-direction: column;
  flex: 1;
  min-height: 0;
  gap: 20px;
  margin: 0;
  padding: 7px 13px 0 0;
  overflow: hidden;
  list-style: none;
`
const ThumbItem = styled.li`
  display: flex;
  flex-direction: column;
  align-items: center;
  flex: none;
`
const ThumbButton = styled.button`
  width: 115px;
  height: 163px;
  background: #fff;
  border: 1px solid #a0a4ac;
  outline: ${props => (props.$active ? "2px solid #2a6099" : "none")};
`
const ThumbDrawing = styled.svg`
  width: 100%;
  fill: #000;
`
const ThumbNumber = styled.span`
  line-height: 24px;
  color: ${props => (props.$active ? "#2b579a" : "#444")};
`
const RulerColumn = styled.div`
  width: 28px;
  flex: none;
`
const TabCorner = styled.button`
  display: flex;
  align-items: center;
  justify-content: center;
  width: 27px;
  height: 27px;
  margin-left: 1px;
  border: 3px solid #d8d8d8;
  background: #fbfbfb;
`
const VRuler = styled.svg`
  margin: 3px 0 0 5px;
  font-family: "Liberation Sans", sans-serif;
  font-size: 9px;
  fill: #444;
`
const HRuler = styled.svg`
  font-family: "Liberation Sans", sans-serif;
  font-size: 9px;
  fill: #444;
`
const Canvas = styled.div`
  display: flex;
  justify-content: center;
  flex: 1;
  min-width: 0;
  padding: 2px 13px 0 0;
  overflow: hidden;
`
const Sheet = styled.div`
  position: relative;
  width: 636px;
  flex: none;
`
const Paper = styled.article`
  padding: 0 95px 57px;
  overflow: hidden;
  border: 1px solid #c6c6c6;
  border-top: none;
  background: #fff;
  color: #000;
  font-family: "Liberation Serif", "Noto Sans CJK SC", serif;
  font-size: 15px;
`
const NextPaper = styled.div`
  height: 40px;
  margin-top: 11px;
  border: 1px solid #c6c6c6;
  background: #fff;
`
const DocTitle = styled.h2`
  margin: -20px 0 33px;
  font-size: 24px;
  font-weight: 500;
  line-height: 33px;
  text-align: center;
  white-space: nowrap;
`
const DocBody = styled.div`
  display: flex;
  flex-direction: column;
  gap: 1px;
`
const Paragraph = styled.p`
  margin: 0;
  font-weight: 300;
  line-height: 33px;
`
const Line = styled.span`
  display: block;
  height: 33px;
  white-space: nowrap;
  text-align: justify;
  text-align-last: ${props => (props.$full ? "justify" : "left")};
`
const Half = styled.span`
  font-feature-settings: "halt";
`
const Latin = styled.span`
  font-weight: 400;
`
const Caret = styled.span`
  display: inline-block;
  width: 1px;
  height: 18px;
  vertical-align: middle;
  background: #000;
`
const PageFoot = styled.footer`
  display: flex;
  justify-content: space-between;
  margin: 14px -20px 0;
`
const CropMark = styled.span`
  width: 20px;
  height: 19px;
  border-top: 1px solid #a6a6a6;
  border-${props => props.$side}: 1px solid #a6a6a6;
`
const PageNumber = styled.span`
  font-size: 9px;
  line-height: 14px;
  color: #666;
`
const ImeBadge = styled.div`
  position: absolute;
  left: 16px;
  top: 586px;
  display: flex;
  align-items: center;
  justify-content: center;
  gap: 3px;
  width: 62px;
  height: 27px;
  border: 1px solid #999;
  border-radius: 5px;
  background: #fff;
  box-shadow: 0 1px 3px #777;
  font-size: 13px;
  line-height: 20px;
`
const StatusBar = styled.footer`
  display: flex;
  align-items: center;
  flex: none;
  height: 22px;
  padding-left: 7px;
  border-top: 1px solid #c0c0c0;
  background: #f1f1f1;
`
const StatusItem = styled.span`
  margin-right: ${props => props.$gap || 20}px;
  padding-bottom: 4px;
  white-space: nowrap;
`
const ViewButtons = styled.div`
  display: flex;
  align-self: stretch;
  margin-left: auto;
`
const ViewButton = styled.button`
  display: flex;
  align-items: center;
  justify-content: center;
  width: 38px;
  padding-bottom: 2px;
  background: ${props => props.$tone};
`
const ZoomStep = styled.button`
  display: flex;
  justify-content: center;
  width: 15px;
`
const ZoomRange = styled.input`
  appearance: none;
  width: 98px;
  height: 11px;
  background: linear-gradient(#a6a6a6, #a6a6a6) center / 100% 1px no-repeat,
    linear-gradient(#a6a6a6, #a6a6a6) center / 1px 5px no-repeat;

  &::-webkit-slider-thumb {
    appearance: none;
    width: 4px;
    height: 11px;
    background: #555;
  }
`
const ZoomValue = styled.span`
  width: 64px;
  padding: 0 0 4px 14px;
`
const TaskBar = styled.div`
  display: flex;
  justify-content: center;
  gap: 1px;
  height: 5px;
  flex: none;
  margin-left: -2px;
  padding-left: 82px;
  background: #1f3642;
`
const TaskItem = styled.span`
  width: 160px;
  background: ${props => props.$tone};
`
const Arrow = styled.svg`
  position: absolute;
  right: 269px;
  bottom: 0;
  filter: drop-shadow(3px 2px 2px rgba(0, 0, 0, 0.5));
  pointer-events: none;
`
const Pointer = styled.svg`
  position: absolute;
  right: 272px;
  bottom: 0;
  pointer-events: none;
`
const Watermark = styled.div`
  position: absolute;
  right: 11px;
  bottom: 8px;
  display: flex;
  align-items: center;
  opacity: 0.8;
  pointer-events: none;
`
const WatermarkText = styled.div`
  display: flex;
  flex-direction: column;
`
const WatermarkName = styled.span`
  font-size: 21px;
  font-weight: 700;
  line-height: 24px;
  color: #4a8ccc;
`
const WatermarkSite = styled.span`
  font-family: "Liberation Sans", sans-serif;
  font-size: 16px;
  font-weight: 700;
  line-height: 18px;
  color: #5cc46c;
`
